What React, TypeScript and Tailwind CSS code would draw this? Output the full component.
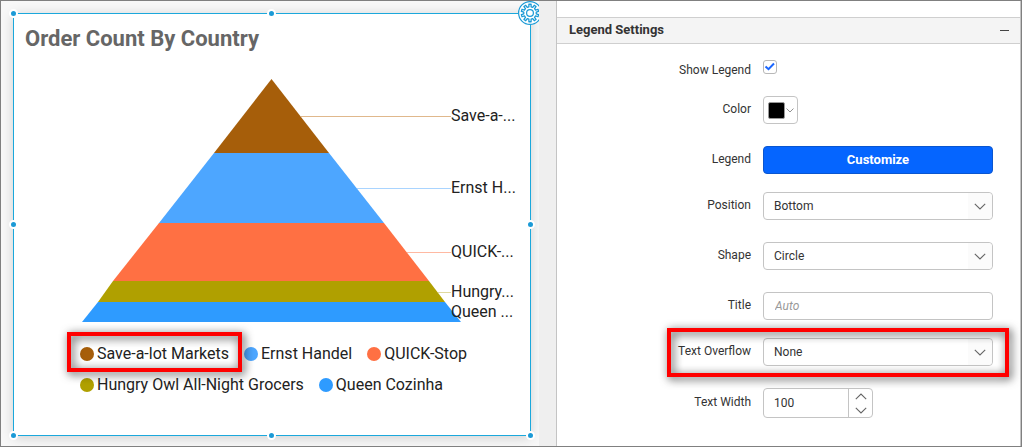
import React from "react";

type Slice = { name: string; color: string };

const slices: Slice[] = [
  { name: "Save-a-lot Markets", color: "#a65e0a" },
  { name: "Ernst Handel", color: "#4da6ff" },
  { name: "QUICK-Stop", color: "#ff7043" },
  { name: "Hungry Owl All-Night Grocers", color: "#b0a000" },
  { name: "Queen Cozinha", color: "#2e9bff" },
];

const bands = [
  { points: "257.5,19 315,93 200,93", color: "#a65e0a" },
  { points: "200,93 315,93 370,163 145,163", color: "#4da6ff" },
  { points: "145,163 370,163 415,221 99,221", color: "#ff7043" },
  { points: "99,221 415,221 431,242 84,242", color: "#b0a000" },
  { points: "84,242 431,242 447,262 68,262", color: "#2e9bff" },
];

const callouts = [
  { text: "Save-a-...", x: 287, y: 56, color: "#e0b88c" },
  { text: "Ernst H...", x: 343, y: 128, color: "#a9d4ff" },
  { text: "QUICK-...", x: 393, y: 192, color: "#ffb9a2" },
  { text: "Hungry...", x: 424, y: 232, color: "#e0d9a0" },
  { text: "Queen ...", x: 437, y: 252, color: "#2e9bff" },
];

function Highlight({ className }: { className: string }) {
  return (
    <div
      aria-hidden="true"
      className={`pointer-events-none absolute z-10 border-4 border-[#ff0000] drop-shadow-[2px_2px_5px_rgba(0,0,0,0.8)] ${className}`}
    />
  );
}

function Handle({ className }: { className: string }) {
  return (
    <span
      className={`absolute size-[9px] rounded-full border-2 border-white bg-[#1b9ad6] ${className}`}
    />
  );
}

function gearPath(cx: number, cy: number, teeth: number, inner: number, outer: number) {
  const step = (Math.PI * 2) / teeth;
  const profile: [number, number][] = [
    [-0.28, inner],
    [-0.2, outer],
    [0.2, outer],
    [0.28, inner],
  ];
  const pts: string[] = [];
  for (let i = 0; i < teeth; i++) {
    for (const [offset, r] of profile) {
      const a = (i + offset) * step - Math.PI / 2;
      pts.push(`${(cx + r * Math.cos(a)).toFixed(2)} ${(cy + r * Math.sin(a)).toFixed(2)}`);
    }
  }
  return `M${pts.join("L")}Z`;
}

function GearButton() {
  return (
    <button
      type="button"
      aria-label="Widget settings"
      className="absolute -top-[13px] -right-3 size-6 rounded-full bg-white"
    >
      <svg viewBox="0 0 24 24" className="size-6" fill="none" stroke="#1b9ad6">
        <circle cx="12" cy="12" r="11.4" strokeWidth="1.2" />
        <path d={gearPath(12, 12, 10, 6.3, 8.8)} strokeWidth="1.3" strokeLinejoin="round" />
        <circle cx="12" cy="12" r="3.4" strokeWidth="1.2" />
      </svg>
    </button>
  );
}

function Chevron({ className, up = false }: { className: string; up?: boolean }) {
  return (
    <svg viewBox="0 0 12 7" className={className} fill="none" stroke="#666" strokeWidth="1.1">
      <path d={up ? "M.8 6.2 6 1l5.2 5.2" : "M.8.8 6 6 11.2.8"} />
    </svg>
  );
}

function PyramidChart() {
  return (
    <svg viewBox="0 0 516 270" className="block w-full" role="img" aria-label="Order count by country">
      {bands.map((b) => (
        <polygon key={b.points} points={b.points} fill={b.color} />
      ))}
      {callouts.map((c) => (
        <g key={c.text}>
          <path d={`M${c.x} ${c.y}.5H437`} stroke={c.color} />
          <text x="437" y={c.y + 5} fontSize="16" fill="#222">
            {c.text}
          </text>
        </g>
      ))}
    </svg>
  );
}

function Row({
  label,
  htmlFor,
  className = "",
  children,
}: {
  label: string;
  htmlFor: string;
  className?: string;
  children: React.ReactNode;
}) {
  return (
    <div className={`relative flex items-center gap-3 ${className}`}>
      <label htmlFor={htmlFor} className="flex-1 pb-0.5 text-right">
        {label}
      </label>
      <div className="flex w-[230px]">{children}</div>
    </div>
  );
}

function Select({ id, value, options }: { id: string; value: string; options: string[] }) {
  return (
    <div className="relative w-full">
      <select
        id={id}
        defaultValue={value}
        className="h-7 w-full appearance-none rounded border border-[#c4c4c4] bg-white px-2.5 text-[#333]"
      >
        {options.map((o) => (
          <option key={o}>{o}</option>
        ))}
      </select>
      <span className="pointer-events-none absolute inset-y-px right-px flex w-6 items-center justify-center rounded-r bg-[#fbfbfb]">
        <Chevron className="w-3" />
      </span>
    </div>
  );
}

export default function App() {
  return (
    <div className="grid min-h-screen grid-cols-[minmax(0,538fr)_17px_minmax(0,465fr)] border border-[#808080] bg-white font-[Roboto,sans-serif] text-xs text-[#333]">
      <main className="overflow-hidden bg-[#f8f8f8] pt-3 pr-2 pb-2.5 pl-3">
        <section className="relative flex h-full flex-col border border-[#1ba8dc] bg-white pb-8 shadow-[0_2px_12px_rgba(0,0,0,0.16)]">
          <h1 className="px-[11px] pt-2.5 pb-1.5 text-[22px] leading-[30px] font-bold text-[#666]">
            Order Count By Country
          </h1>
          <PyramidChart />
          <ul className="flex flex-wrap gap-x-[15px] pt-2 pr-5 pl-[66px] text-base text-[#222]">
            {slices.map((s, i) => (
              <li key={s.name} className="relative flex h-[31px] items-center gap-[3px]">
                <span className="size-3.5 rounded-full" style={{ backgroundColor: s.color }} />
                {s.name}
                {i === 0 && <Highlight className="-inset-x-[13px] -top-1.5 -bottom-[3px]" />}
              </li>
            ))}
          </ul>
          <Handle className="-top-[5px] -left-[5px]" />
          <Handle className="-top-[5px] left-[calc(50%-5px)]" />
          <Handle className="top-[calc(50%-5px)] -left-[5px]" />
          <Handle className="top-[calc(50%-5px)] -right-[5px]" />
          <Handle className="-bottom-[5px] -left-[5px]" />
          <Handle className="-bottom-[5px] left-[calc(50%-5px)]" />
          <Handle className="-right-[5px] -bottom-[5px]" />
          <GearButton />
        </section>
      </main>
      <div className="bg-[#efefef]" />
      <aside className="border-x border-[#c4c4c4] pt-4">
        <div className="flex h-[27px] items-center justify-between border-y border-[#cfcfcf] bg-[#f4f4f4] pr-[11px] pl-3">
          <h2 className="pb-0.5 text-[13px] font-bold">Legend Settings</h2>
          <button type="button" aria-label="Collapse" className="flex h-4 items-center">
            <span className="h-px w-[9px] bg-[#444]" />
          </button>
        </div>
        <form className="pt-4 pr-[27px] pb-7 pl-3">
          <div className="relative flex items-center gap-3">
            <label htmlFor="show-legend" className="flex-1 pt-0.5 text-right">
              Show Legend
            </label>
            <span className="relative flex h-[18px] w-[230px] items-start">
              <input
                id="show-legend"
                type="checkbox"
                defaultChecked
                className="peer size-3.5 appearance-none rounded-[3px] border border-[#b8b8b8] bg-white"
              />
              <svg
                viewBox="0 0 14 14"
                className="pointer-events-none absolute left-0 hidden size-3.5 peer-checked:block"
                fill="none"
                stroke="#1a66ff"
                strokeWidth="2"
              >
                <path d="M2.5 6.5 5.5 9.2 11 3.5" />
              </svg>
            </span>
          </div>
          <Row label="Color" htmlFor="color" className="mt-[18px]">
            <button
              id="color"
              type="button"
              className="flex h-7 w-[35px] items-center gap-px rounded border border-[#c4c4c4] pl-1"
            >
              <span className="size-[17px] rounded-xs border border-[#999] bg-black" />
              <Chevron className="w-2" />
            </button>
          </Row>
          <Row label="Legend" htmlFor="customize" className="mt-[22px]">
            <button
              id="customize"
              type="button"
              className="h-7 w-full rounded border border-[#0a56d0] bg-[#0565ff] text-[13px] font-bold text-white"
            >
              Customize
            </button>
          </Row>
          <Row label="Position" htmlFor="position" className="mt-[18px]">
            <Select id="position" value="Bottom" options={["Top", "Bottom", "Left", "Right"]} />
          </Row>
          <Row label="Shape" htmlFor="shape" className="mt-[22px]">
            <Select id="shape" value="Circle" options={["Circle", "Rectangle", "Diamond"]} />
          </Row>
          <Row label="Title" htmlFor="title" className="mt-[22px]">
            <input
              id="title"
              type="text"
              placeholder="Auto"
              className="h-7 w-full rounded border border-[#c4c4c4] px-[11px] placeholder:text-[#999] placeholder:italic"
            />
          </Row>
          <Row label="Text Overflow" htmlFor="overflow" className="mt-[18px]">
            <Select id="overflow" value="None" options={["None", "Trim"]} />
            <Highlight className="-top-2.5 -right-4 -bottom-[11px] left-[98px]" />
          </Row>
          <Row label="Text Width" htmlFor="text-width" className="mt-[22px]">
            <div className="flex h-[30px] w-[110px] overflow-hidden rounded border border-[#c4c4c4]">
              <input id="text-width" type="text" inputMode="numeric" defaultValue="100" className="w-[84px] px-2.5" />
              <div className="flex flex-1 flex-col items-center justify-center gap-0.5 border-l border-[#c4c4c4]">
                <button type="button" aria-label="Increase" className="flex h-3 items-center">
                  <Chevron up className="w-3" />
                </button>
                <button type="button" aria-label="Decrease" className="flex h-3 items-center">
                  <Chevron className="w-3" />
                </button>
              </div>
            </div>
          </Row>
        </form>
      </aside>
    </div>
  );
}
